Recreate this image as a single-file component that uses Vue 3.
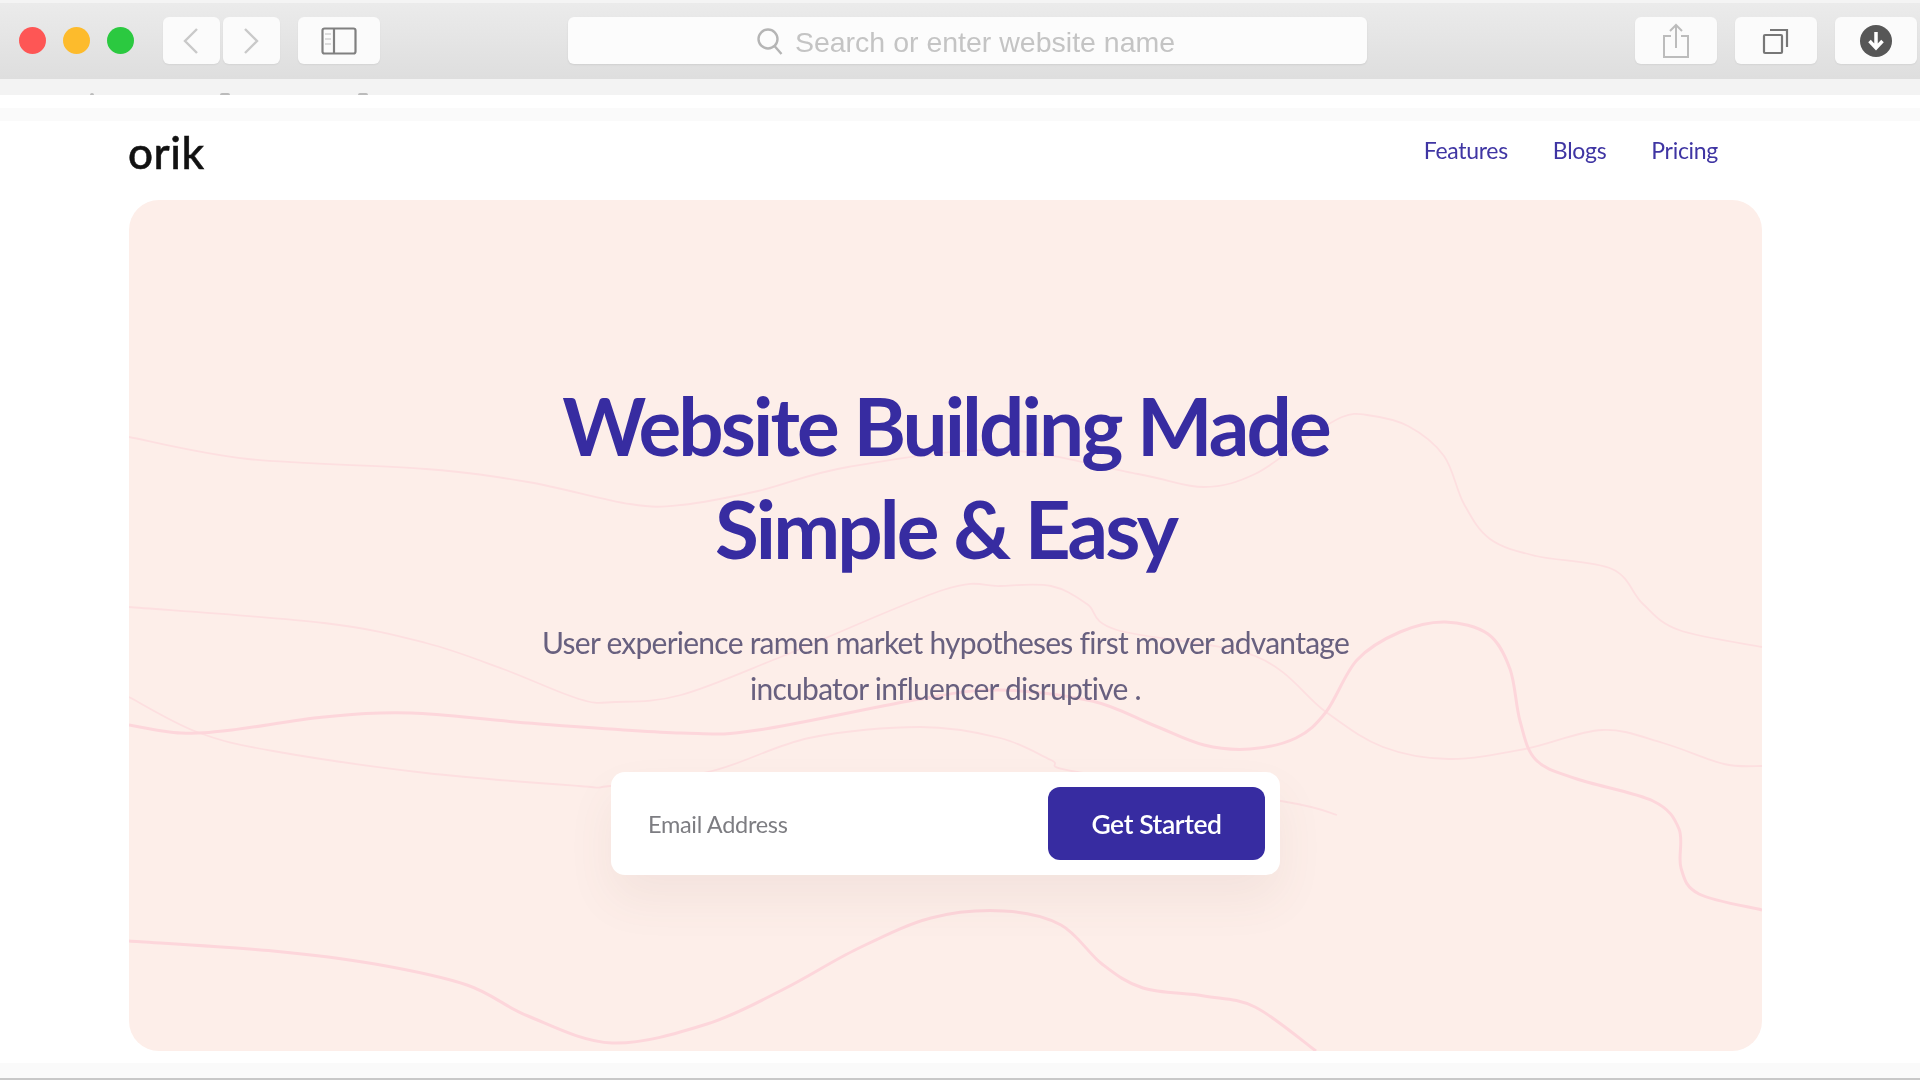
<script setup>
const links = ["Features", "Blogs", "Pricing"];

// points read off the reference, in hero coordinates (page x - 129, page y - 200)
const toHero = (pts) => pts.map(([x, y]) => [x - 129, y - 200]);

const smooth = (raw) => {
  const p = toHero(raw);
  let d = `M${p[0][0]} ${p[0][1]}`;
  for (let i = 0; i < p.length - 1; i++) {
    const a = p[i - 1] || p[i];
    const b = p[i];
    const c = p[i + 1];
    const e = p[i + 2] || c;
    const c1 = [b[0] + (c[0] - a[0]) / 6, b[1] + (c[1] - a[1]) / 6];
    const c2 = [c[0] - (e[0] - b[0]) / 6, c[1] - (e[1] - b[1]) / 6];
    d += ` C${c1[0].toFixed(1)} ${c1[1].toFixed(1)} ${c2[0].toFixed(1)} ${c2[1].toFixed(1)} ${c[0]} ${c[1]}`;
  }
  return d;
};

const faintLines = [
  [[129, 437], [248, 459], [426, 469], [528, 482], [630, 504], [681, 505], [758, 491], [848, 467], [1000, 450], [1138, 474], [1204, 487], [1255, 474], [1306, 439], [1342, 417], [1367, 415], [1408, 426], [1444, 456], [1464, 504], [1490, 539], [1536, 556], [1612, 569], [1643, 604], [1679, 630], [1762, 647]],
  [[129, 607], [324, 623], [426, 643], [503, 669], [579, 699], [615, 702], [681, 695], [783, 656], [943, 590], [1000, 586], [1051, 586], [1087, 604], [1117, 630], [1255, 656], [1326, 712], [1383, 747], [1449, 759], [1525, 749], [1602, 730], [1663, 743], [1724, 764], [1762, 766]],
  [[129, 697], [197, 732], [273, 751], [426, 773], [579, 786], [610, 786], [712, 771], [809, 738], [920, 727], [1000, 738], [1051, 760], [1077, 772], [1281, 801], [1337, 815]],
].map(smooth);

const strongLines = [
  [[129, 725], [181, 733], [232, 730], [324, 717], [411, 713], [528, 723], [681, 733], [758, 730], [920, 699], [1000, 690], [1092, 701], [1153, 725], [1204, 745], [1250, 749], [1296, 738], [1326, 712], [1357, 660], [1400, 632], [1445, 622], [1488, 634], [1510, 669], [1520, 721], [1536, 760], [1577, 779], [1653, 801], [1679, 829], [1681, 868], [1699, 894], [1762, 910]],
  [[129, 941], [273, 951], [375, 964], [467, 985], [528, 1016], [612, 1043], [707, 1024], [784, 989], [857, 949], [931, 918], [1004, 911], [1061, 925], [1102, 964], [1143, 988], [1204, 996], [1255, 1007], [1316, 1051]],
].map(smooth);
</script>

<template>
  <div class="page">
    <header class="toolbar">
      <div class="lights">
        <span class="light light--red"></span>
        <span class="light light--amber"></span>
        <span class="light light--green"></span>
      </div>
      <div class="nav-buttons">
        <button class="tool tool--nav">
          <svg width="18" height="28" viewBox="0 0 18 28" fill="none" stroke="#c9c9c9" stroke-width="2.4">
            <path d="M15 2 3 14l12 12" />
          </svg>
        </button>
        <button class="tool tool--nav">
          <svg width="18" height="28" viewBox="0 0 18 28" fill="none" stroke="#c9c9c9" stroke-width="2.4">
            <path d="m3 2 12 12L3 26" />
          </svg>
        </button>
      </div>
      <button class="tool tool--sidebar">
        <svg width="36" height="28" viewBox="0 0 36 28" fill="none" stroke="#808080" stroke-width="2.2">
          <rect x="1.5" y="1.5" width="33" height="25" rx="2" />
          <path d="M13 1.500v25" />
          <path d="M4 7h6M4 12h6M4 17h6" stroke-width="1.2" stroke="#bdbdbd" />
        </svg>
      </button>
      <div class="address">
        <svg width="28" height="28" viewBox="0 0 28 28" fill="none" stroke="#b5b5b5" stroke-width="2.4">
          <circle cx="12" cy="12" r="9.500" />
          <path d="m18.500 19 7 8" />
        </svg>
        <span>Search or enter website name</span>
      </div>
      <button class="tool tool--wide">
        <svg width="28" height="36" viewBox="0 0 28 36" fill="none" stroke="#bcbcbc" stroke-width="2">
          <path d="M9 13H2v21h24V13h-7" />
          <path d="M14 25V2M8 8l6-6 6 6" />
        </svg>
      </button>
      <button class="tool tool--wide">
        <svg width="28" height="28" viewBox="0 0 28 28" fill="none" stroke="#777" stroke-width="2.200">
          <rect x="2" y="8" width="18" height="18" rx="1" />
          <path d="M8 3h17v17" />
        </svg>
      </button>
      <button class="tool tool--wide">
        <svg width="34" height="34" viewBox="0 0 34 34">
          <circle cx="17" cy="17" r="16" fill="#575757" />
          <path d="M17 8v15M10.500 17l6.500 7 6.500-7" fill="none" stroke="#fff" stroke-width="3.500" />
        </svg>
      </button>
    </header>
    <div class="strip">
      <i class="speck speck--a"></i>
      <i class="speck speck--b"></i>
      <i class="speck speck--c"></i>
    </div>
    <div class="gap"></div>
    <div class="tabline"></div>

    <main class="content">
      <nav class="topnav">
        <div class="logo">orik</div>
        <div class="links">
          <a v-for="link in links" :key="link" href="#">{{ link }}</a>
        </div>
      </nav>

      <section class="hero">
        <svg class="hero__lines" width="1633" height="851" viewBox="0 0 1633 851" fill="none">
          <path v-for="(d, i) in faintLines" :key="'f' + i" :d="d" stroke="#fddfe0" stroke-width="1.800" />
          <path v-for="(d, i) in strongLines" :key="'s' + i" :d="d" stroke="#fdd6db" stroke-width="3" />
        </svg>
        <div class="hero__body">
          <h1>Website Building Made<br />Simple &amp; Easy</h1>
          <p>
            User experience ramen market hypotheses first mover advantage<br />
            incubator influencer disruptive .
          </p>
          <form class="signup" @submit.prevent>
            <input type="text" placeholder="Email Address" />
            <button type="submit">Get Started</button>
          </form>
        </div>
      </section>
    </main>
    <div class="bottom-edge"></div>
  </div>
</template>

<style scoped>
.page {
  height: 1080px;
  overflow: hidden;
  display: flex;
  flex-direction: column;
  background: #fff;
  font-family: Lato, "Open Sans", sans-serif;
  filter: blur(0.35px);
}
.toolbar {
  margin-top: 3px;
  height: 76px;
  flex: none;
  box-sizing: border-box;
  padding: 14px 3px 15px 19px;
  display: flex;
  align-items: stretch;
  background: linear-gradient(#ebebeb, #dedede);
  box-shadow: 0 -3px 0 #f4f4f4;
  filter: blur(0.5px);
}
.lights {
  display: flex;
  align-items: center;
  gap: 17px;
  width: 144px;
}
.light {
  width: 27px;
  height: 27px;
  border-radius: 50%;
}
.light--red {
  background: #fe5655;
}
.light--amber {
  background: #fdbb2c;
}
.light--green {
  background: #2bc940;
}
.nav-buttons {
  display: flex;
  gap: 3px;
  margin-right: 18px;
}
.tool {
  border: 0;
  padding: 0;
  display: flex;
  align-items: center;
  justify-content: center;
  background: #fbfbfb;
  border-radius: 6px;
  box-shadow: 0 1px 2px rgba(0, 0, 0, 0.06);
}
.tool--nav {
  width: 57px;
}
.tool--sidebar {
  width: 82px;
  margin-right: 188px;
}
.tool--wide {
  width: 82px;
  margin-left: 18px;
}
.address {
  width: 800px;
  margin-right: 250px;
  box-sizing: border-box;
  padding: 4px 4px 0 0;
  display: flex;
  align-items: center;
  justify-content: center;
  gap: 11px;
  background: #fcfcfc;
  border-radius: 6px;
  box-shadow: 0 1px 2px rgba(0, 0, 0, 0.08);
  font-family: "Liberation Sans", Arial, sans-serif;
  font-size: 28.500px;
  color: #c4c4c4;
}
.address svg {
  margin-top: -4px;
}
.strip {
  position: relative;
  height: 16px;
  flex: none;
  background: #f3f3f3;
}
.speck {
  position: absolute;
  bottom: 0;
  height: 2px;
  background: #bbb;
  border-radius: 2px 2px 0 0;
}
.speck--a {
  left: 90px;
  width: 4px;
}
.speck--b {
  left: 220px;
  width: 10px;
}
.speck--c {
  left: 358px;
  width: 10px;
}
.gap {
  height: 13px;
  flex: none;
}
.tabline {
  height: 13px;
  flex: none;
  background: #fafafa;
}
.content {
  flex: 1;
  box-sizing: border-box;
  padding: 0 158px 12px 129px;
  display: flex;
  flex-direction: column;
}
.topnav {
  height: 79px;
  flex: none;
  box-sizing: border-box;
  padding: 0 44px 18px 0;
  display: flex;
  align-items: center;
  justify-content: space-between;
}
.logo {
  margin-left: -1px;
  font-size: 44px;
  font-weight: 500;
  color: #111;
  line-height: 1;
  letter-spacing: 0.5px;
  -webkit-text-stroke: 0.5px #111;
}
.links {
  display: flex;
  gap: 45px;
  margin-top: -4px;
}
.links a {
  font-size: 23px;
  color: #3f35a3;
  text-decoration: none;
  letter-spacing: -0.3px;
}
.hero {
  position: relative;
  height: 851px;
  flex: none;
  overflow: hidden;
  background: #fdeee9;
  border-radius: 30px;
}
.hero__lines {
  position: absolute;
  inset: 0;
}
.hero__body {
  position: relative;
  padding-top: 174px;
  display: flex;
  flex-direction: column;
  align-items: center;
  text-align: center;
}
h1 {
  margin: 0;
  font-size: 80px;
  font-weight: 700;
  line-height: 103px;
  letter-spacing: -2.900px;
  color: #372ca1;
}
p {
  margin: 39px 0 0;
  font-size: 30px;
  line-height: 46px;
  letter-spacing: -0.750px;
  color: #68607f;
}
.signup {
  margin-top: 61px;
  width: 669px;
  height: 103px;
  box-sizing: border-box;
  padding: 15px 15px 15px 37px;
  display: flex;
  align-items: stretch;
  background: #fff;
  border-radius: 14px;
  box-shadow: 0 24px 48px rgba(120, 80, 70, 0.07);
}
.signup input {
  flex: 1;
  min-width: 0;
  border: 0;
  outline: 0;
  padding: 0;
  background: transparent;
  font-family: inherit;
  font-size: 23.500px;
  letter-spacing: -0.300px;
}
.signup input::placeholder {
  color: #7d7d82;
  opacity: 1;
}
.signup button {
  width: 217px;
  border: 0;
  border-radius: 12px;
  background: #372ca1;
  color: #fff;
  font-family: inherit;
  font-size: 26.500px;
  font-weight: 600;
  letter-spacing: -0.400px;
}
.bottom-edge {
  height: 17px;
  flex: none;
  box-sizing: border-box;
  background: #fafafa;
  border-bottom: 2px solid #c8c8c8;
}
</style>

<style>
html,
body {
  margin: 0;
  background: #fff;
}
</style>
